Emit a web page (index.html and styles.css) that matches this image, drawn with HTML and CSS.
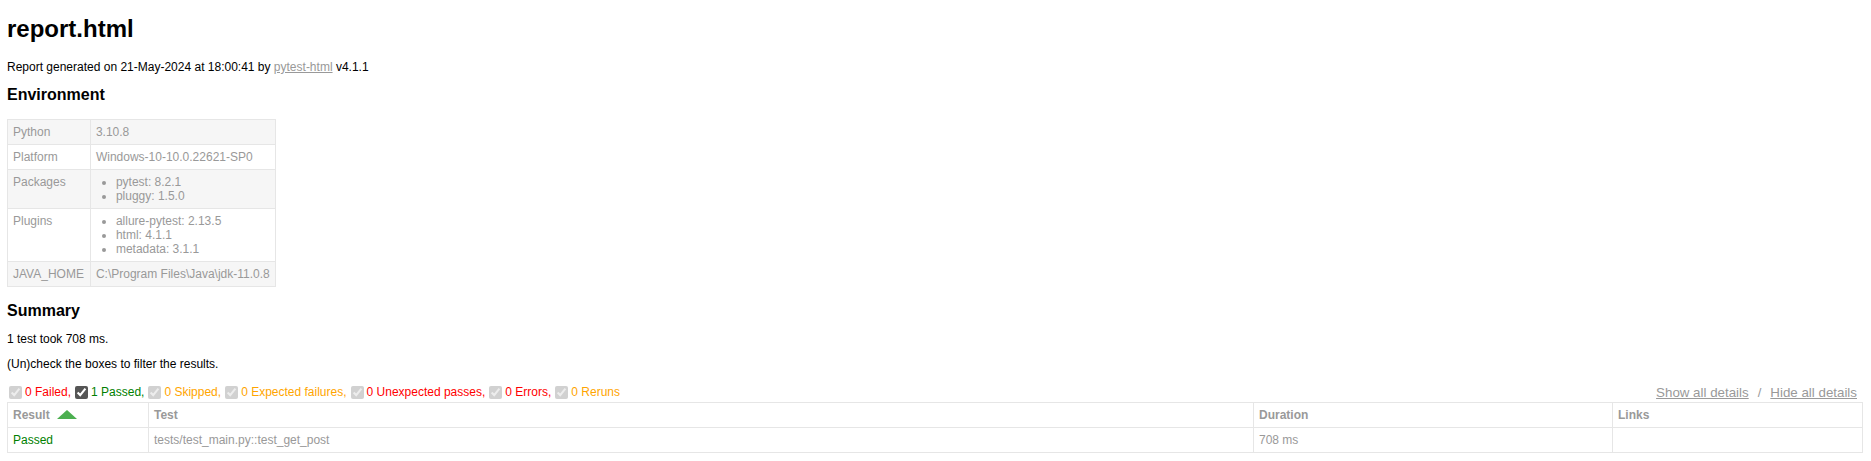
FILE: index.html
```html
<!DOCTYPE html>
<html lang="en">
<head>
    <meta charset="UTF-8">
    <meta name="viewport" content="width=device-width, initial-scale=1.0">
    <title>report.html</title>
    <link rel="stylesheet" href="styles.css">
</head>
<body>
    <h1 class="title">report.html</h1>
    <p class="generated">Report generated on 21-May-2024 at 18:00:41 by <a href="#">pytest-html</a> v4.1.1</p>

    <div id="environment-header">
        <h2>Environment</h2>
    </div>
    <table id="environment">
        <tr>
            <td>Python</td>
            <td>3.10.8</td>
        </tr>
        <tr>
            <td>Platform</td>
            <td>Windows-10-10.0.22621-SP0</td>
        </tr>
        <tr>
            <td>Packages</td>
            <td>
                <ul>
                    <li>pytest: 8.2.1</li>
                    <li>pluggy: 1.5.0</li>
                </ul>
            </td>
        </tr>
        <tr>
            <td>Plugins</td>
            <td>
                <ul>
                    <li>allure-pytest: 2.13.5</li>
                    <li>html: 4.1.1</li>
                    <li>metadata: 3.1.1</li>
                </ul>
            </td>
        </tr>
        <tr>
            <td>JAVA_HOME</td>
            <td>C:\Program Files\Java\jdk-11.0.8</td>
        </tr>
    </table>

    <div class="summary">
        <h2>Summary</h2>
        <p class="run-count">1 test took 708 ms.</p>
        <p class="filter">(Un)check the boxes to filter the results.</p>
        <div class="controls">
            <div class="filters">
                <input type="checkbox" class="filter" checked disabled />
                <span class="failed">0 Failed,</span>
                <input type="checkbox" class="filter" checked />
                <span class="passed">1 Passed,</span>
                <input type="checkbox" class="filter" checked disabled />
                <span class="skipped">0 Skipped,</span>
                <input type="checkbox" class="filter" checked disabled />
                <span class="xfailed">0 Expected failures,</span>
                <input type="checkbox" class="filter" checked disabled />
                <span class="xpassed">0 Unexpected passes,</span>
                <input type="checkbox" class="filter" checked disabled />
                <span class="error">0 Errors,</span>
                <input type="checkbox" class="filter" checked disabled />
                <span class="rerun">0 Reruns</span>
            </div>
            <div class="collapse">
                <button id="show_all_details">Show all details</button><span class="slash">/</span><button id="hide_all_details">Hide all details</button>
            </div>
        </div>
    </div>

    <table id="results-table">
        <colgroup>
            <col class="col-result">
            <col class="col-testId">
            <col class="col-duration">
            <col class="col-links">
        </colgroup>
        <thead>
            <tr>
                <th class="sortable asc">Result</th>
                <th>Test</th>
                <th>Duration</th>
                <th>Links</th>
            </tr>
        </thead>
        <tbody>
            <tr>
                <td class="passed">Passed</td>
                <td>tests/test_main.py::test_get_post</td>
                <td>708 ms</td>
                <td></td>
            </tr>
        </tbody>
    </table>
</body>
</html>
```

FILE: styles.css
```css
body {
  font-family: "Liberation Sans", Helvetica, Arial, sans-serif;
  font-size: 12px;
  min-width: 800px;
  color: #999;
  margin: 0 8px 0 7px;
}

h1 {
  font-size: 24px;
  color: black;
  margin: 15px 0 17px 0;
}

h2 {
  font-size: 16px;
  color: black;
  margin: 0;
}

p {
  color: black;
  margin: 0;
}

a {
  color: #999;
}

table {
  border-collapse: collapse;
}

.generated {
  margin-bottom: 12px;
}

#environment-header h2 {
  margin-bottom: 15px;
}

#environment td {
  padding: 5px;
  border: 1px solid #e6e6e6;
  vertical-align: top;
}
#environment td:first-child {
  padding-right: 6px;
}
#environment tr:nth-child(odd) {
  background-color: #f6f6f6;
}
#environment ul {
  margin: 0;
  padding: 0 20px;
}

.summary {
  margin-top: 15px;
}
.summary h2 {
  margin-bottom: 12px;
}
.run-count {
  margin-bottom: 11px;
}

.controls {
  display: flex;
  justify-content: space-between;
  align-items: center;
  margin-top: 12px;
  height: 18px;
}

.filters {
  display: flex;
  align-items: center;
}
.filters input {
  margin: 0 3px 0 2px;
  width: 13px;
  height: 13px;
  accent-color: #555;
}
.filters span {
  margin-right: 2px;
}

.collapse {
  color: #999;
  font-size: 13px;
}
.collapse .slash {
  padding: 0 3px;
}
.collapse button {
  color: #999;
  border: none;
  background: none;
  cursor: pointer;
  text-decoration: underline;
  font-family: inherit;
  font-size: 13.333px;
  padding: 1px 6px;
}

.passed {
  color: green;
}
.failed,
.error,
.xpassed {
  color: red;
}
.skipped,
.xfailed,
.rerun {
  color: orange;
}

#results-table {
  border: 1px solid #e6e6e6;
  color: #999;
  font-size: 12px;
  width: 100%;
  table-layout: fixed;
  margin-top: 1px;
}
#results-table th,
#results-table td {
  padding: 5px;
  border: 1px solid #e6e6e6;
  text-align: left;
  height: 14px;
}
#results-table th {
  font-weight: bold;
}
#results-table td.passed {
  color: green;
}

.col-result {
  width: 141px;
}
.col-testId {
  width: 1105px;
}
.col-duration {
  width: 359px;
}

.sortable {
  cursor: pointer;
}
.sortable.asc:after {
  content: "";
  display: inline-block;
  margin-left: 7px;
  vertical-align: 0px;
  border: 10px solid #4caf50;
  border-top: 0;
  border-bottom-width: 9px;
  border-left-color: transparent;
  border-right-color: transparent;
}
```
